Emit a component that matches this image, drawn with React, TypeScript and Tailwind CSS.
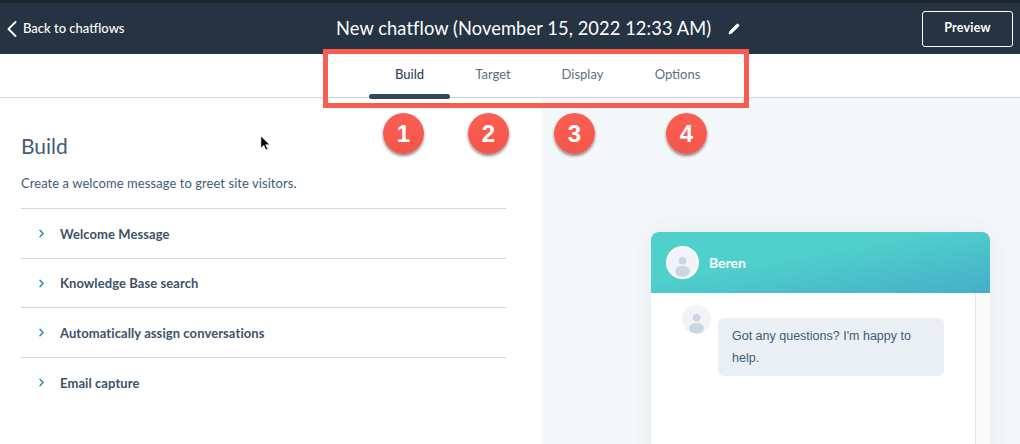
import { Pencil } from "lucide-react";

const TABS = [
  { label: "Build", className: "w-[81px] text-[#33475b] font-medium" },
  { label: "Target", className: "w-[86px] text-[#5b6f82]" },
  { label: "Display", className: "w-[93px] text-[#5b6f82]" },
  { label: "Options", className: "w-[97px] text-[#5b6f82]" },
];

const SECTIONS = [
  { label: "Welcome Message", height: "h-[50px]" },
  { label: "Knowledge Base search", height: "h-[49px]" },
  { label: "Automatically assign conversations", height: "h-[50px]" },
  { label: "Email capture", height: "h-[50px]" },
];

// Numbered callouts that sit over the page
const CALLOUTS = [
  { n: 1, className: "left-[383px]" },
  { n: 2, className: "left-[468px]" },
  { n: 3, className: "left-[554px]" },
  { n: 4, className: "left-[666px]" },
];

function Avatar({ className, ring }: { className: string; ring?: boolean }) {
  return (
    <div
      className={`${className} shrink-0 rounded-full overflow-hidden bg-[#f0f3f7] ${ring ? "border-2 border-white" : ""}`}
    >
      <svg viewBox="0 0 32 32" className="w-full h-full">
        <circle cx="16" cy="14" r="4.2" fill="#cbd6e2" />
        <ellipse cx="16" cy="25.5" rx="8.2" ry="6" fill="#cbd6e2" />
      </svg>
    </div>
  );
}

export default function App() {
  return (
    <div className="relative w-[1020px] h-[444px] overflow-hidden bg-white font-['Lato','Open_Sans',sans-serif] flex flex-col">
      <div className="h-[3px] bg-[#1e272e]" />

      {/* Top bar */}
      <header className="h-[51px] bg-[#253342] flex items-center text-white">
        <div className="w-[336px] shrink-0 flex items-center pl-[7px]">
          <svg viewBox="0 0 10 16" className="w-[10px] h-[16px]" fill="none" stroke="currentColor" strokeWidth="1.8" strokeLinecap="round" strokeLinejoin="round">
            <path d="M8.500 1 1.500 8l7 7" />
          </svg>
          <span className="ml-[6px] text-[13px] font-medium">Back to chatflows</span>
        </div>
        <span className="text-[18.250px] tracking-[0.1px]">New chatflow (November 15, 2022 12:33 AM)</span>
        <Pencil className="ml-[17px] w-[12px] h-[12px] fill-white" strokeWidth={1.5} />
        <button className="ml-auto mr-[7px] w-[91px] h-[36px] rounded-[3px] border border-white text-[12.500px] font-bold tracking-[0.2px]">
          Preview
        </button>
      </header>

      {/* Tabs */}
      <nav className="relative h-[44px] border-b border-[#cfd6dc] flex pl-[369px] shrink-0">
        {TABS.map((tab) => (
          <div
            key={tab.label}
            className={`${tab.className} pt-[12px] text-center text-[13px] leading-[16px]`}
          >
            {tab.label}
          </div>
        ))}
        <div className="absolute left-[369px] top-[40px] w-[81px] h-[5px] rounded-full bg-[#33475b]" />
      </nav>

      <div className="flex flex-1 min-h-0">
        {/* Left panel */}
        <section className="w-[542px] shrink-0 pl-[21px] pr-[36px] pt-[35px] text-[#33475b]">
          <h1 className="text-[21px] leading-[26px] text-[#425b76]">Build</h1>
          <p className="mt-[15px] text-[13px] tracking-[0.06px] leading-[18px] text-[#425b76]">
            Create a welcome message to greet site visitors.
          </p>
          <ul className="mt-[16px]">
            {SECTIONS.map((section) => (
              <li
                key={section.label}
                className={`${section.height} border-t border-[#d2d6da] flex items-center`}
              >
                <svg viewBox="0 0 6 10" className="ml-[18px] w-[5px] h-[9px] text-[#1f8fa6]" fill="none" stroke="currentColor" strokeWidth="1.700" strokeLinecap="round" strokeLinejoin="round">
                  <path d="m1.200 1 3.600 4-3.600 4" />
                </svg>
                <span className="ml-[16px] pt-[2px] text-[13px] font-bold text-[#3d5268] tracking-[0.08px]">
                  {section.label}
                </span>
              </li>
            ))}
          </ul>
        </section>

        {/* Widget preview */}
        <section className="flex-1 bg-[#f5f8fa] pl-[109px] pr-[30px] pt-[134px]">
          <div className="h-[300px] rounded-t-[8px] bg-white overflow-hidden flex flex-col shadow-[0_0_24px_rgba(45,62,80,0.08)]">
            <div className="h-[61px] shrink-0 bg-gradient-to-br from-[#50d0cb] from-40% to-[#45aec9] flex items-center pl-[15px]">
              <Avatar className="w-[33px] h-[33px]" ring />
              <span className="ml-[10px] pb-[1px] text-[14px] font-bold text-white">Beren</span>
            </div>
            <div className="flex flex-1">
              <div className="flex-1 border-r border-[#dfe3eb] pl-[31px] pt-[12px] flex items-start">
                <Avatar className="w-[29px] h-[29px]" />
                <div className="ml-[7px] mt-[13px] w-[226px] h-[58px] rounded-[6px] bg-[#eaf0f6] pl-[14px] pr-[24px] pt-[7px] font-['Liberation_Sans',sans-serif] text-[12.500px] leading-[22px] text-[#425b76]">
                  Got any questions? I'm happy to help.
                </div>
              </div>
              <div className="w-[14px] bg-[#fafafa]" />
            </div>
          </div>
        </section>
      </div>

      {/* Annotations */}
      <div className="absolute left-[323px] top-[49px] w-[426px] h-[59px] border-[5px] border-[#f95c50]" />
      {CALLOUTS.map((c) => (
        <div
          key={c.n}
          className={`${c.className} absolute top-[113px] w-[41px] h-[41px] rounded-full bg-gradient-to-b from-[#fb5f52] to-[#f4554a] shadow-[0_2px_3px_rgba(0,0,0,0.45)] flex items-center justify-center font-['Liberation_Sans',sans-serif] text-[24px] font-bold text-white`}
        >
          {c.n}
        </div>
      ))}

      {/* Mouse cursor */}
      <svg viewBox="0 0 12 18" className="absolute left-[260px] top-[135px] w-[11px] h-[17px]">
        <path d="M1 1v13l3.200-3 2.200 5 2-.9-2.200-4.800H10.500z" fill="#000" stroke="#fff" strokeWidth="0.6" />
      </svg>
    </div>
  );
}
